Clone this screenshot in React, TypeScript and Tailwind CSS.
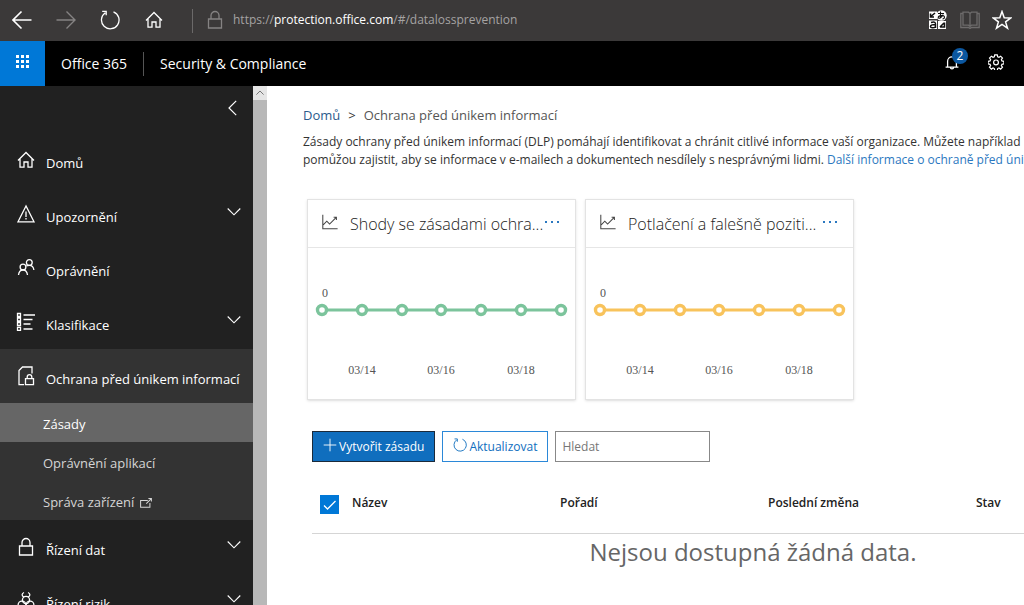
import { useState } from "react";
import type { ReactNode } from "react";

function Svg({ children, className = "h-5 w-5 shrink-0" }: { children: ReactNode; className?: string }) {
  return (
    <svg viewBox="0 0 20 20" fill="none" stroke="currentColor" strokeWidth="1.3" className={className} aria-hidden="true">
      {children}
    </svg>
  );
}

function ArrowIcon({ right = false }: { right?: boolean }) {
  return (
    <Svg>
      {right ? <path strokeWidth="1.4" d="M.5 10h18.500M10.500 1.500l8.500 8.500-8.500 8.500" /> : <path strokeWidth="1.600" d="M19.500 10H1M9.500 1.500 1 10l8.500 8.500" />}
    </Svg>
  );
}

function ChevronDownIcon() {
  return (
    <Svg className="mb-1 h-3.5 w-3.5 shrink-0">
      <path strokeWidth="1.600" d="m1 5 9 9 9-9" />
    </Svg>
  );
}

function HomeIcon({ className }: { className?: string }) {
  return (
    <Svg className={className}>
      <path d="M2 10.500 10 2.500l8 8M4 9v8.200h4V12h4v5.200h4V9" />
    </Svg>
  );
}

function LockIcon({ className }: { className?: string }) {
  return (
    <Svg className={className}>
      <path d="M3.500 9h13v9h-13zM6 9V5.500a4 4 0 0 1 8 0V9" />
    </Svg>
  );
}

function AlertIcon() {
  return (
    <Svg>
      <path d="M10 2 2 17.800h16zM10 7.500v5.500M10 14v1.500" />
    </Svg>
  );
}

function PeopleIcon() {
  return (
    <Svg>
      <circle cx="7" cy="9" r="2.900" />
      <circle cx="13.300" cy="4.500" r="2.900" />
      <path d="M2.500 17c.4-3.300 2-5 4.500-5s4.100 1.700 4.500 5M10.300 8c.9-.5 1.800-.7 3-.7 2.600 0 4.200 1.700 4.600 4.700" />
    </Svg>
  );
}

function ListIcon() {
  return (
    <Svg>
      <path d="M7.500 3H19M7.500 7.500h9M7.500 12h7M7.500 17h9" />
      <path d="M1.500 1.500h3v3h-3zM1.500 6h3v3h-3zM1.500 10.500h3v3h-3zM1.500 15.300h3v3h-3z" />
    </Svg>
  );
}

function DocLockIcon() {
  return (
    <Svg>
      <path d="M8 18.700H3V4.500L6.500 1H16v6.500" />
      <path d="M9.500 12.700h8v6h-8zM11.200 12.700v-1.800a2.300 2.300 0 0 1 4.600 0v1.800" />
    </Svg>
  );
}

function HazardIcon() {
  return (
    <Svg>
      <circle cx="10" cy="9" r="3.600" />
      <circle cx="6" cy="14" r="3.900" />
      <circle cx="14" cy="14" r="3.900" />
      <path d="M8 1.500C5.500 2.500 5.500 5 8 6M12 1.500c2.500 1 2.500 3.500 0 4.500" />
    </Svg>
  );
}

function RefreshIcon({ className }: { className?: string }) {
  return (
    <Svg className={className}>
      <path d="M13.500 1.800a8.800 8.800 0 1 1-8.200.9M2.200 1.300h4v4" />
    </Svg>
  );
}

function TranslateIcon() {
  return (
    <svg viewBox="0 0 20 20" className="h-5 w-5" fill="none" aria-hidden="true">
      <path d="M1 1.500h8v7.500H1zM10 11h8v8h-8z" fill="white" />
      <circle cx="13.500" cy="5.500" r="5.200" fill="white" />
      <path d="M1 10.500h8v8.500H1z" fill="white" />
      <path d="M2.500 3.500v3.500h3.500M2.800 6.500 7 3M12 17h4.500v-4.500M16 13l-4 4" stroke="#111" strokeWidth="1.600" />
      <path d="M10 3.500h6M12.500 1.500v6M15 4.500c-.5 2.500-4.500 5-4.800 3 0-2 6.300-3 6.300-.2 0 1.200-1 1.700-2 1.700" stroke="#111" strokeWidth="1.100" />
      <path d="M3 12.500c4-1 4.500 0 4.500 1.500v4M7.500 14.500c-3 0-5 .5-5 2s3.500 2 5 .2" stroke="#111" strokeWidth="1.500" />
    </svg>
  );
}

function BookIcon() {
  return (
    <Svg>
      <path d="M3 3.500H.8v14H9c.3 1 1.700 1 2 0h8.200v-14H17" />
      <path d="M3 2.200h5.500L10 3.500l1.500-1.300H17v13h-5.500L10 16.500l-1.500-1.300H3zM10 3.500v13" />
    </Svg>
  );
}

function StarIcon() {
  return (
    <Svg>
      <path strokeWidth="1.500" d="m10 1.500 2.200 6.200 6.600.2-5.200 4 1.900 6.300L10 14.400l-5.500 3.800 1.900-6.300-5.200-4 6.600-.2z" />
    </Svg>
  );
}

function BellIcon() {
  return (
    <Svg className="h-4 w-4">
      <path d="M2 16.500h16M4.500 16.500V9a5.500 5.500 0 0 1 11 0v7.500M8 16.500a2 2 0 0 0 4 0" strokeWidth="1.600" />
    </Svg>
  );
}

function GearIcon() {
  return (
    <Svg className="h-4 w-4">
      <path
        strokeWidth="1.500"
        d="M8.400 1h3.200l.5 2.500 1.600.7 2.100-1.500 2.300 2.300-1.400 2.100.7 1.600 2.500.5v3.200l-2.500.5-.7 1.600 1.400 2.100-2.300 2.300-2.100-1.400-1.600.7-.5 2.400H8.400l-.5-2.400-1.600-.7-2.100 1.400-2.300-2.300 1.400-2.100-.7-1.600L.1 12.400V9.200l2.500-.5.7-1.600-1.400-2.100 2.300-2.300 2.100 1.500 1.600-.7z"
      />
      <circle cx="10" cy="10.500" r="3" strokeWidth="1.500" />
    </Svg>
  );
}

function ChartIcon() {
  return (
    <Svg className="mb-1 h-4 w-4 shrink-0 text-[#444]">
      <path d="M1 1v17.500h18.500M1.500 13.500 6 9l3.500 3.500 8-8M14.500 4H18v3.500" />
    </Svg>
  );
}

function ExternalIcon() {
  return (
    <Svg className="h-3 w-3">
      <path strokeWidth="1.700" d="M13 6H1v11h15.500v-7M10.500 11l8-8M14 2.500h5v5" />
    </Svg>
  );
}

const topItems = [
  { label: "Domů", icon: <HomeIcon />, expandable: false },
  { label: "Upozornění", icon: <AlertIcon />, expandable: true },
  { label: "Oprávnění", icon: <PeopleIcon />, expandable: false },
  { label: "Klasifikace", icon: <ListIcon />, expandable: true },
];

const bottomItems = [
  { label: "Řízení dat", icon: <LockIcon />, expandable: true },
  { label: "Řízení rizik", icon: <HazardIcon />, expandable: true },
];

const subItems = [
  { label: "Zásady", external: false },
  { label: "Oprávnění aplikací", external: false },
  { label: "Správa zařízení", external: true },
];

const columns = ["Název", "Pořadí", "Poslední změna", "Stav"];

function NavItem({ label, icon, expandable }: { label: string; icon: ReactNode; expandable: boolean }) {
  return (
    <a href="#" className="flex h-[54px] items-center gap-2.5 pr-3 pl-4 text-[13px] text-white">
      {icon}
      <span className="grow pt-2 whitespace-nowrap">{label}</span>
      {expandable && <ChevronDownIcon />}
    </a>
  );
}

function ChartCard({ title, color }: { title: string; color: string }) {
  const points = [0, 1, 2, 3, 4, 5, 6].map((i) => 14 + Math.round(i * 39.8));
  const labels = [
    { x: points[1], text: "03/14" },
    { x: points[3], text: "03/16" },
    { x: points[5], text: "03/18" },
  ];

  return (
    <section className="w-[269px] shrink-0 border border-[#e3e3e3] bg-white shadow-sm">
      <header className="flex h-12 items-center border-b border-[#e6e6e6] pr-4 pl-3.5">
        <ChartIcon />
        <h2 className="ml-3 grow text-base font-light whitespace-nowrap text-[#222]">{title}</h2>
        <button type="button" aria-label="Další možnosti" className="mb-1 flex gap-1">
          <span className="h-0.5 w-0.5 bg-[#2b78c0]" />
          <span className="h-0.5 w-0.5 bg-[#2b78c0]" />
          <span className="h-0.5 w-0.5 bg-[#2b78c0]" />
        </button>
      </header>
      <svg viewBox="0 0 267 151" className="block w-full" role="img" aria-label={title}>
        <line x1={points[0]} y1="62" x2={points[6]} y2="62" stroke={color} strokeWidth="3" />
        {points.map((x) => (
          <circle key={x} cx={x} cy="62" r="4.500" fill="white" stroke={color} strokeWidth="3.400" />
        ))}
        <g fill="#555" fontSize="12" textAnchor="middle" className="font-['Liberation_Serif',serif]">
          <text x="17" y="49">0</text>
          {labels.map((l) => (
            <text key={l.text} x={l.x} y="126">{l.text}</text>
          ))}
        </g>
      </svg>
    </section>
  );
}

export default function App() {
  const [search, setSearch] = useState("");
  const [allSelected, setAllSelected] = useState(true);

  return (
    <div className="flex h-screen flex-col overflow-hidden bg-white font-['Open_Sans','Noto_Sans',sans-serif]">
      {/* Browser bar */}
      <div className="flex h-[41px] shrink-0 items-center bg-[#3b3939] px-3 text-white">
        <div className="flex items-center gap-6 pb-0.5">
          <button type="button" aria-label="Back"><ArrowIcon /></button>
          <button type="button" aria-label="Forward" className="text-[#858383]"><ArrowIcon right /></button>
          <button type="button" aria-label="Refresh"><RefreshIcon /></button>
          <button type="button" aria-label="Home"><HomeIcon /></button>
        </div>
        <div className="ml-7 h-6 w-px bg-[#6b6969]" />
        <button type="button" aria-label="Address" className="ml-3 flex grow items-center gap-2 pb-0.5 text-xs text-[#a5a3a3]">
          <LockIcon className="h-5 w-5 text-[#858383]" />
          <span>https://<span className="text-white">protection.office.com</span>/#/datalossprevention</span>
        </button>
        <div className="flex items-center gap-3 pb-0.5">
          <button type="button" aria-label="Translate"><TranslateIcon /></button>
          <button type="button" aria-label="Reading view" className="text-[#6d6b6b]"><BookIcon /></button>
          <button type="button" aria-label="Favorites"><StarIcon /></button>
        </div>
      </div>

      {/* Office header */}
      <header className="flex h-[45px] shrink-0 items-center bg-black text-sm text-white">
        <button type="button" aria-label="App launcher" className="flex h-full w-[45px] items-center justify-center bg-[#0078d7]">
          <svg viewBox="0 0 14 14" className="mb-1 h-3.5 w-3.5" fill="white" aria-hidden="true">
            {[0, 5, 10].map((y) => [0, 5, 10].map((x) => <rect key={`${x}-${y}`} x={x} y={y} width="3" height="3" />))}
          </svg>
        </button>
        <a href="#" className="ml-4">Office 365</a>
        <div className="ml-4 h-6 w-px bg-[#555]" />
        <a href="#" className="ml-4 grow">Security &amp; Compliance</a>
        <div className="flex items-center gap-7 pr-5 pb-1">
          <button type="button" aria-label="Notifications" className="relative">
            <BellIcon />
            <span className="absolute -top-1.5 left-2 flex h-4 w-4 items-center justify-center rounded-full bg-[#0b57a0] text-xs">2</span>
          </button>
          <button type="button" aria-label="Settings"><GearIcon /></button>
        </div>
      </header>

      <div className="flex min-h-0 grow">
        {/* Sidebar */}
        <nav className="w-[253px] shrink-0 overflow-hidden bg-[#212121]">
          <div className="flex h-[47px] justify-end px-3 pt-3.5">
            <button type="button" aria-label="Sbalit" className="h-4 text-white">
              <Svg className="h-4 w-4"><path strokeWidth="1.500" d="m14 1-9 9 9 9" /></Svg>
            </button>
          </div>
          {topItems.map((item) => (
            <NavItem key={item.label} {...item} />
          ))}
          <div className="bg-[#333]">
            <NavItem label="Ochrana před únikem informací" icon={<DocLockIcon />} expandable={false} />
            {subItems.map((item, i) => (
              <a
                key={item.label}
                href="#"
                className={`flex h-[39px] items-center gap-1.5 pt-1 pl-[43px] text-[13px] ${i === 0 ? "bg-[#666] text-white" : "text-[#d5d5d5]"}`}
              >
                {item.label}
                {item.external && <ExternalIcon />}
              </a>
            ))}
          </div>
          {bottomItems.map((item) => (
            <NavItem key={item.label} {...item} />
          ))}
        </nav>

        <div className="flex w-3.5 shrink-0 flex-col bg-[#b8b8b8]">
          <button type="button" aria-label="Scroll up" className="flex h-3.5 items-center justify-center bg-[#e6e6e6] text-[#777]">
            <Svg className="h-2 w-2"><path strokeWidth="2.500" d="m1 14 9-9 9 9" /></Svg>
          </button>
        </div>

        {/* Content */}
        <main className="min-w-0 grow overflow-hidden pl-9">
          <div className="mt-[19px] flex gap-2 text-[13px] leading-5 text-[#555]">
            <a href="#" className="text-[#2b5a8c]">Domů</a>
            <span className="text-[#333]">&gt;</span>
            <span>Ochrana před únikem informací</span>
          </div>
          <p className="mt-2 text-xs leading-[18px] whitespace-nowrap text-[#333]">
            Zásady ochrany před únikem informací (DLP) pomáhají identifikovat a chránit citlivé informace vaší organizace. Můžete například na
            <br />
            pomůžou zajistit, aby se informace v e-mailech a dokumentech nesdílely s nesprávnými lidmi.{" "}
            <a href="#" className="text-[#2b78c0]">Další informace o ochraně před únikem</a>
          </p>

          <div className="mt-[30px] ml-1 flex gap-[9px]">
            <ChartCard title="Shody se zásadami ochra..." color="#7cc49c" />
            <ChartCard title="Potlačení a falešně poziti..." color="#f8c35c" />
          </div>

          <div className="mt-[31px] ml-[9px] flex gap-[7px] text-xs">
            <button type="button" className="flex h-[31px] items-center gap-0.5 border border-[#1b2a3a] bg-[#106ebe] px-2.5 text-white">
              <Svg className="mb-1 h-3.5 w-3.5"><path d="M10 1v18M1 10h18" /></Svg>
              <span>Vytvořit zásadu</span>
            </button>
            <button type="button" className="flex h-[31px] items-center gap-0.5 border border-[#2b88d8] bg-white px-2.5 text-[#106ebe]">
              <RefreshIcon className="mb-1 h-3.5 w-3.5" />
              <span>Aktualizovat</span>
            </button>
            <input
              type="text"
              aria-label="Hledat"
              placeholder="Hledat"
              value={search}
              onChange={(e) => setSearch(e.target.value)}
              className="h-[31px] w-[155px] border border-[#888] px-1.5 placeholder:text-[#767676]"
            />
          </div>

          <table className="mt-[11px] ml-[9px] w-[872px] table-fixed text-left">
            <thead>
              <tr className="h-[60px] border-b border-[#d5d5d5] text-xs text-[#222]">
                <th className="w-10 pt-1 pl-2">
                  <span className="relative block h-[19px] w-[19px]">
                    <input
                      type="checkbox"
                      aria-label="Vybrat vše"
                      checked={allSelected}
                      onChange={(e) => setAllSelected(e.target.checked)}
                      className="peer block h-[19px] w-[19px] appearance-none border border-[#0078d7] checked:bg-[#0078d7]"
                    />
                    <svg viewBox="0 0 19 19" className="pointer-events-none absolute inset-0 hidden peer-checked:block" fill="none" stroke="white" strokeWidth="1.300" aria-hidden="true">
                      <path d="m4 10.500 3.500 3.500 8-8" />
                    </svg>
                  </span>
                </th>
                {columns.map((column) => (
                  <th key={column} className="w-[208px] font-semibold">{column}</th>
                ))}
              </tr>
            </thead>
            <tbody>
              <tr>
                <td colSpan={5} className="pt-0.5 pl-2.5 text-center text-2xl text-[#666]">Nejsou dostupná žádná data.</td>
              </tr>
            </tbody>
          </table>
        </main>
      </div>
    </div>
  );
}
